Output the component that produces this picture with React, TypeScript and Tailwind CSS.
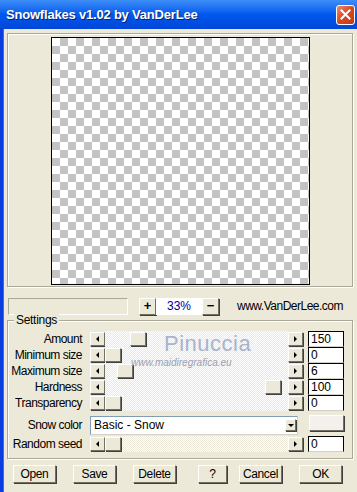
import React from "react";

const FONT = { fontFamily: '"Liberation Sans", Arial, sans-serif' };

const checker =
  "bg-[conic-gradient(#c3c3c3_0_25%,#fff_0_50%,#c3c3c3_0_75%,#fff_0)] bg-[length:16px_16px]";
const dither =
  "bg-[conic-gradient(#ece9d8_0_25%,#fff_0_50%,#ece9d8_0_75%,#fff_0)] bg-[length:2px_2px]";

const raised =
  "bg-[#ece9d8] border border-t-white border-l-white border-r-[#716f64] border-b-[#716f64] shadow-[1px_1px_0_#404040]";

const ArrowBtn = ({ dir }: { dir: "left" | "right" }) => (
  <div className={`w-[15px] h-[14px] flex items-center justify-center ${raised}`}>
    {dir === "left" ? (
      <div className="w-0 h-0 border-y-[3px] border-y-transparent border-r-[3px] border-r-black" />
    ) : (
      <div className="w-0 h-0 border-y-[3px] border-y-transparent border-l-[3px] border-l-black" />
    )}
  </div>
);

const Edit = ({ value }: { value: string }) => (
  <div className="w-[36px] h-[16px] bg-white border border-t-black border-l-black border-r-black border-b-[#d4d0c8] text-[12px] leading-[14px] pl-[2px] text-black">
    {value}
  </div>
);

const Slider = ({ thumb }: { thumb: number | null }) => (
  <div className="flex items-center w-[213px] h-[16px]">
    <ArrowBtn dir="left" />
    <div className={`relative flex-1 h-[16px] ${dither}`}>
      {thumb !== null && (
        <div
          className={`absolute top-[1px] w-[16px] h-[14px] ${raised}`}
          style={{ left: thumb }}
        />
      )}
    </div>
    <ArrowBtn dir="right" />
  </div>
);

const Label = ({ text }: { text: string }) => (
  <div className="w-[75px] text-right text-[12px] tracking-[-0.5px] leading-[14px] text-black pr-[1px] whitespace-nowrap">
    {text}
  </div>
);

const Row = ({
  label,
  thumb,
  value,
}: {
  label: string;
  thumb: number | null;
  value: string;
}) => (
  <div className="flex items-center h-[16px]">
    <Label text={label} />
    <div className="ml-[7px]">
      <Slider thumb={thumb} />
    </div>
    <div className="ml-[5px]">
      <Edit value={value} />
    </div>
  </div>
);

const Button = ({ label, w = 43 }: { label: string; w?: number }) => (
  <div
    className={`h-[18px] flex items-center justify-center text-[12px] tracking-[-0.4px] text-black ${raised}`}
    style={{ width: w }}
  >
    {label}
  </div>
);

export default function App() {
  return (
    <div className="w-[357px] h-[492px] overflow-hidden bg-[#ece9d8] flex flex-col" style={FONT}>
      {/* title bar */}
      <div className="h-[29px] flex items-center justify-between bg-gradient-to-b from-[#3d8df7] via-[#0058ee] to-[#0046d6] pl-[6px] pr-[2px]">
        <span className="text-white font-bold text-[13px] tracking-[-0.2px] [text-shadow:1px_1px_0_#0a246a]">
          Snowflakes v1.02 by VanDerLee
        </span>
        <div className="w-[19px] h-[20px] rounded-[3px] bg-gradient-to-br from-[#e98a6e] via-[#d9471f] to-[#c33a16] border border-white flex items-center justify-center">
          <svg width="11" height="11" viewBox="0 0 11 11">
            <path d="M1.5 1.5 L9.5 9.5 M9.5 1.5 L1.5 9.5" stroke="#fff" strokeWidth="2" strokeLinecap="square" />
          </svg>
        </div>
      </div>

      <div className="flex flex-1">
        <div className="w-[4px] bg-[#0a3ee0] border-r border-[#2f6ff0]" />
        <div className="flex-1 flex flex-col pl-[3px] pr-[4px] pt-[4px]">
          {/* preview */}
          <div className="h-[254px] border border-[#aca899] shadow-[inset_1px_1px_0_#fff,1px_1px_0_#fff]">
            <div className={`ml-[43px] mt-[3px] w-[259px] h-[248px] border border-black ${checker}`} />
          </div>

          {/* zoom row */}
          <div className="flex items-center mt-[10px] h-[18px]">
            <div className="ml-[1px] w-[120px] h-[17px] border border-t-[#aca899] border-l-[#aca899] border-r-white border-b-white" />
            <div className="ml-[11px]">
              <div className={`w-[17px] h-[17px] flex items-center justify-center text-[13px] font-bold ${raised}`}>+</div>
            </div>
            <div className="w-[46px] h-[17px] bg-white text-[#0000a0] text-[12px] flex items-center justify-center">33%</div>
            <div className={`w-[17px] h-[17px] flex items-center justify-center text-[13px] font-bold ${raised}`}>−</div>
            <div className="ml-[18px] text-[12px] tracking-[-0.5px] text-black">www.VanDerLee.com</div>
          </div>

          {/* settings group */}
          <div className="relative mt-[5px] h-[139px] border border-[#aca899] shadow-[inset_1px_1px_0_#fff,1px_1px_0_#fff] pt-[10px]">
            <div className="absolute -top-[8px] left-[6px] px-[2px] bg-[#ece9d8] text-[12px] tracking-[-0.3px] text-black leading-[14px]">
              Settings
            </div>
            <Row label="Amount" thumb={25} value="150" />
            <Row label="Minimum size" thumb={0} value="0" />
            <Row label="Maximum size" thumb={12} value="6" />
            <Row label="Hardness" thumb={160} value="100" />
            <Row label="Transparency" thumb={0} value="0" />

            <div className="flex items-center h-[20px] mt-[4px]">
              <Label text="Snow color" />
              <div className="ml-[7px] w-[208px] h-[19px] bg-white border border-t-[#7f9db9] border-l-[#7f9db9] border-r-[#d4d0c8] border-b-[#d4d0c8] flex items-center">
                <span className="flex-1 pl-[3px] text-[12px] text-black">Basic - Snow</span>
                <div className="mr-[1px]">
                  <div className={`w-[11px] h-[12px] flex items-center justify-center ${raised}`}>
                    <div className="w-0 h-0 border-x-[3px] border-x-transparent border-t-[3px] border-t-black" />
                  </div>
                </div>
              </div>
              <div className="ml-[11px] self-start w-[35px] h-[16px] bg-[#f3f0ee] border border-t-white border-l-white border-r-[#716f64] border-b-[#716f64] shadow-[1px_1px_0_#404040]" />
            </div>

            <div className="mt-[1px]">
              <Row label="Random seed" thumb={0} value="0" />
            </div>

            {/* watermark */}
            <div className="absolute left-[156px] top-[12px] text-[22px] text-[#a9b3cd] tracking-[0.5px] leading-none">
              Pinuccia
            </div>
            <div className="absolute left-[123px] top-[37px] text-[10px] italic text-[#9aa0b0] leading-none">
              www.maidiregrafica.eu
            </div>
          </div>

          {/* buttons */}
          <div className="flex items-center mt-[6px] pl-[6px]">
            <Button label="Open" />
            <div className="ml-[17px]"><Button label="Save" /></div>
            <div className="ml-[17px]"><Button label="Delete" /></div>
            <div className="ml-[22px]"><Button label="?" w={29} /></div>
            <div className="ml-[12px]"><Button label="Cancel" /></div>
            <div className="ml-[17px]"><Button label="OK" /></div>
          </div>
        </div>
      </div>
    </div>
  );
}
